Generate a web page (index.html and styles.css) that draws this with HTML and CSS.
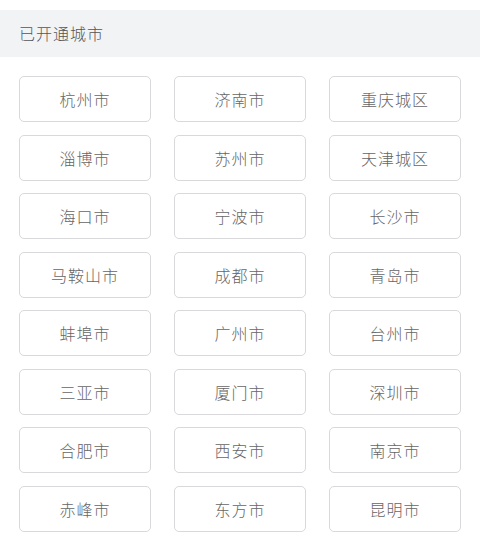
FILE: index.html
```html
<!DOCTYPE html>
<html lang="zh-CN">
<head>
  <meta charset="UTF-8">
  <title>已开通城市</title>
  <link rel="stylesheet" href="styles.css">
</head>
<body>
  <div class="titulo">已开通城市</div>

  <div class="cidades">
    <div class="cidade">杭州市</div>
    <div class="cidade">济南市</div>
    <div class="cidade">重庆城区</div>
    <div class="cidade">淄博市</div>
    <div class="cidade">苏州市</div>
    <div class="cidade">天津城区</div>
    <div class="cidade">海口市</div>
    <div class="cidade">宁波市</div>
    <div class="cidade">长沙市</div>
    <div class="cidade">马鞍山市</div>
    <div class="cidade">成都市</div>
    <div class="cidade">青岛市</div>
    <div class="cidade">蚌埠市</div>
    <div class="cidade">广州市</div>
    <div class="cidade">台州市</div>
    <div class="cidade">三亚市</div>
    <div class="cidade">厦门市</div>
    <div class="cidade">深圳市</div>
    <div class="cidade">合肥市</div>
    <div class="cidade">西安市</div>
    <div class="cidade">南京市</div>
    <div class="cidade">赤峰市</div>
    <div class="cidade">东方市</div>
    <div class="cidade">昆明市</div>
  </div>
</body>
</html>
```

FILE: styles.css
```css
body {
  margin: 0;
  background-color: #fff;
  color: #555;
  font-family: "Noto Sans CJK SC", "Noto Sans", sans-serif;
  font-weight: 300;
}

.titulo {
  margin-top: 10px;
  height: 47px;
  line-height: 47px;
  padding-left: 19px;
  background-color: #f2f3f5;
  font-size: 16px;
  letter-spacing: 1px;
  color: #555;
}

.cidades {
  display: grid;
  grid-template-columns: repeat(3, 1fr);
  column-gap: 23px;
  row-gap: 12.5px;
  padding: 19px 19px 0;
}

.cidade {
  height: 44px;
  line-height: 44px;
  text-align: center;
  font-size: 16px;
  letter-spacing: 1px;
  color: #666;
  border: 1px solid #d9d9dc;
  border-radius: 5px;
}
```
